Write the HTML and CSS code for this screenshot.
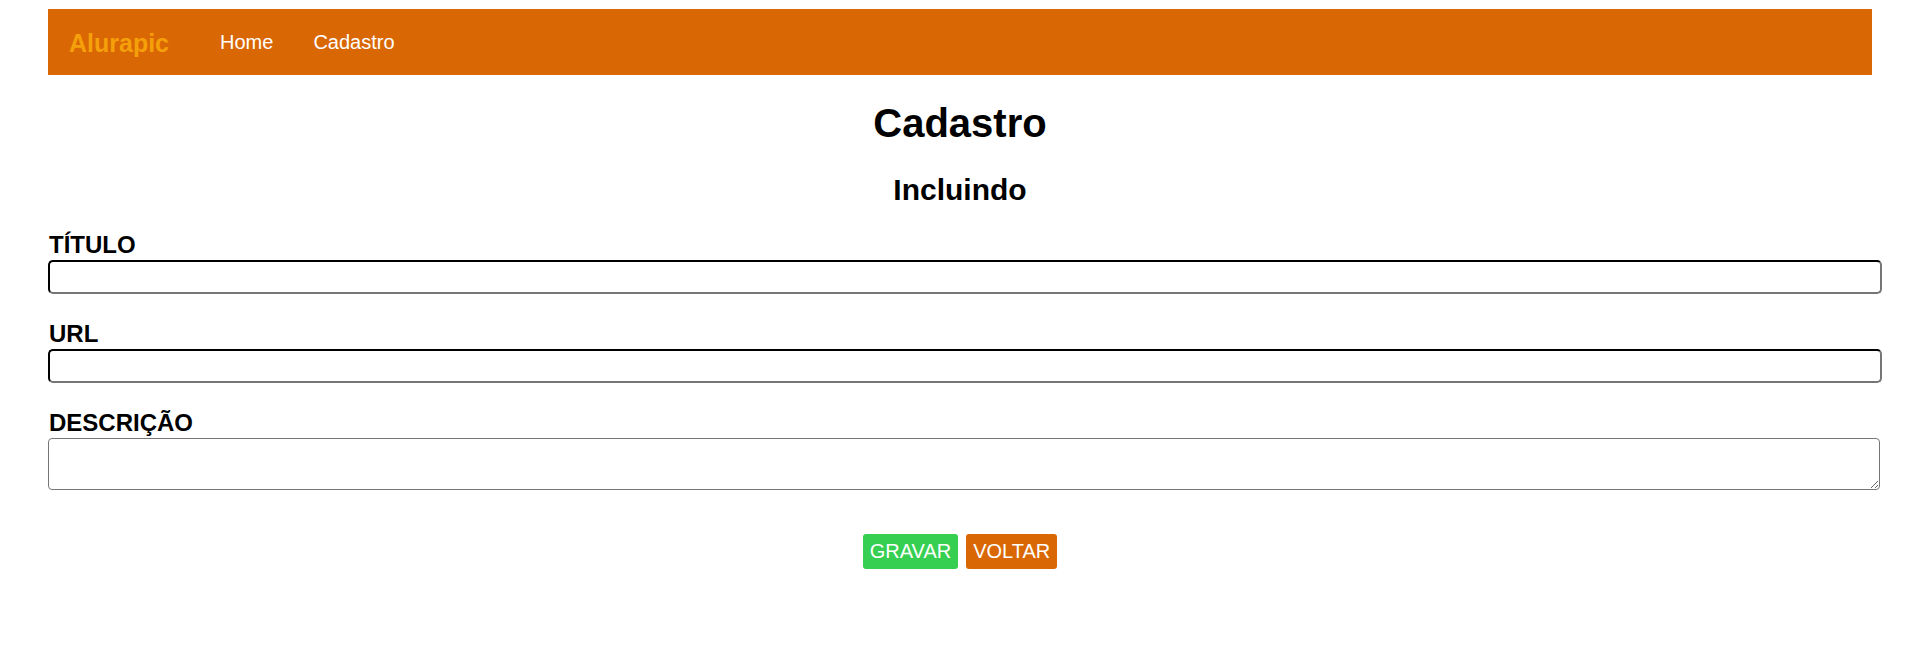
FILE: index.html
```html
<!DOCTYPE html>
<html lang="pt-BR">
<head>
<meta charset="utf-8">
<title>Alurapic - Cadastro</title>
<link rel="stylesheet" href="styles.css">
</head>
<body>
<div class="container">
  <nav class="navbar">
    <a class="brand" href="#">Alurapic</a>
    <ul class="nav-links">
      <li><a href="#">Home</a></li>
      <li><a href="#">Cadastro</a></li>
    </ul>
  </nav>
  <h1 class="title">Cadastro</h1>
  <h2 class="subtitle">Incluindo</h2>
  <form class="form">
    <div class="field">
      <label class="label" for="titulo">TÍTULO</label>
      <input class="input" id="titulo" type="text">
    </div>
    <div class="field">
      <label class="label" for="url">URL</label>
      <input class="input" id="url" type="text">
    </div>
    <div class="field">
      <label class="label" for="descricao">DESCRIÇÃO</label>
      <textarea class="textarea" id="descricao"></textarea>
    </div>
    <div class="actions">
      <button class="btn btn-green" type="button">GRAVAR</button>
      <button class="btn btn-orange" type="button">VOLTAR</button>
    </div>
  </form>
</div>
</body>
</html>
```

FILE: styles.css
```css
* { box-sizing: border-box; }

html, body {
  margin: 0;
  padding: 0;
  background: #ffffff;
}

body {
  font-family: "Liberation Sans", Arial, sans-serif;
  color: #000;
}

.container {
  padding: 9px 48px 0 48px;
}

.navbar {
  display: flex;
  align-items: center;
  height: 66px;
  background: #d96704;
  padding: 0 0 0 21px;
}

.brand {
  font-size: 25px;
  font-weight: bold;
  color: #f5a00a;
  text-decoration: none;
  margin-right: 31px;
  line-height: 28px;
  padding-top: 2px;
}

.nav-links {
  list-style: none;
  display: flex;
  margin: 0;
  padding: 0;
}

.nav-links a {
  display: block;
  padding: 0 20px;
  font-size: 20px;
  line-height: 24px;
  color: #fff;
  text-decoration: none;
}

.title {
  margin: 25px 0 0 0;
  font-size: 40px;
  line-height: 46px;
  text-align: center;
  font-weight: bold;
}

.subtitle {
  margin: 27px 0 0 0;
  font-size: 30px;
  line-height: 34px;
  text-align: center;
  font-weight: bold;
}

.form {
  display: flex;
  flex-direction: column;
  margin-top: 23px;
}

.field {
  display: flex;
  flex-direction: column;
  margin-bottom: 25px;
}

.label {
  font-size: 24px;
  line-height: 26px;
  font-weight: bold;
  padding: 2px 0 0 1px;
}

.input {
  margin-top: 2px;
  width: calc(100% + 10px);
  height: 34px;
  border: 2px inset #767676;
  border-top-color: #1f1f1f;
  border-left-color: #1f1f1f;
  border-right-color: #767676;
  border-bottom-color: #767676;
  border-radius: 5px;
  background: #fff;
  font-size: 20px;
  padding: 2px 4px;
}

.textarea {
  margin-top: 2px;
  width: calc(100% + 8px);
  height: 52px;
  border: 1px solid #767676;
  border-radius: 4px;
  background: #fff;
  font-size: 16px;
  padding: 2px;
  font-family: "Liberation Mono", monospace;
}

.actions {
  display: flex;
  justify-content: center;
  gap: 8px;
  margin-top: 19px;
}

.btn {
  height: 35px;
  padding: 0 7px;
  border: none;
  border-radius: 3px;
  color: #fff;
  font-family: "Liberation Sans", Arial, sans-serif;
  font-size: 20px;
  line-height: 35px;
  cursor: pointer;
}

.btn-green { background: #36cf52; }
.btn-orange { background: #d96704; }
```
